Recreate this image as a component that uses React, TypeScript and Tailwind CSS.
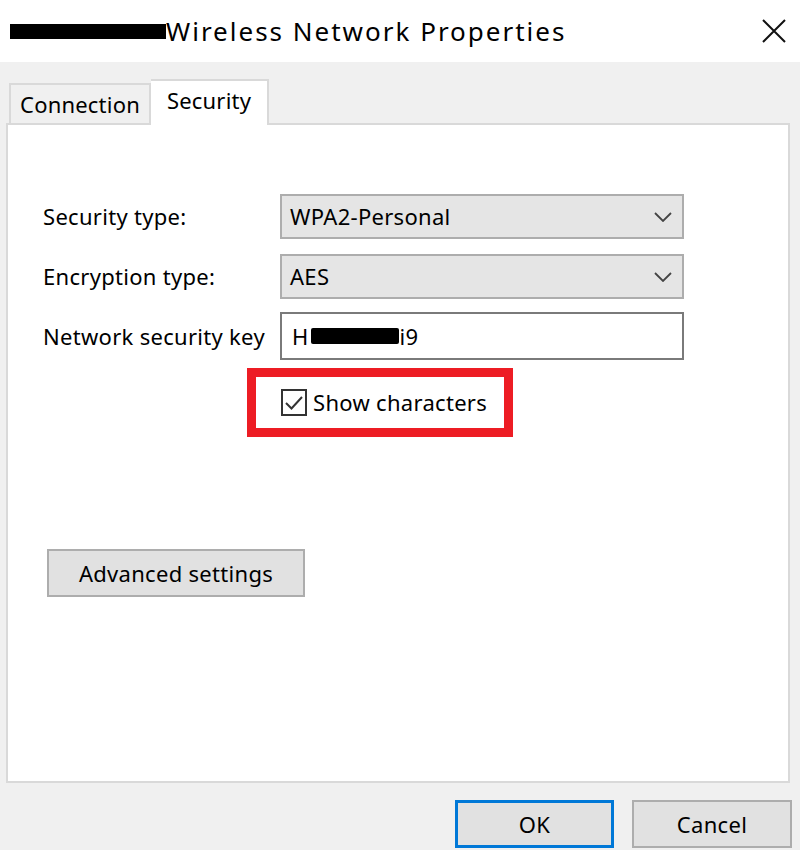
export default function App() {
  const font = { fontFamily: '"Noto Sans", "Open Sans", sans-serif' };
  return (
    <div className="w-[800px] h-[850px] bg-[#f0f0f0] text-[#000] overflow-hidden flex flex-col" style={font}>
      {/* title bar */}
      <div className="h-[62px] bg-white flex items-center pl-[10px] pr-[14px] shrink-0">
        <span className="w-[156px] h-[15px] bg-black mt-[1px]" />
        <span className="text-[26px] leading-none tracking-[2px]">Wireless Network Properties</span>
        <svg className="ml-auto" width="24" height="24" viewBox="0 0 24 24">
          <path d="M1 1 L23 23 M23 1 L1 23" stroke="#111" strokeWidth="2" />
        </svg>
      </div>

      {/* tabs */}
      <div className="flex items-end pl-[9px] h-[61px] shrink-0 text-[22px] tracking-[0.2px]">
        <div className="h-[40px] w-[142px] bg-[#f0f0f0] border-2 border-b-0 border-[#d9d9d9] flex items-center justify-center">
          Connection
        </div>
        <div className="h-[46px] w-[118px] bg-white border-2 border-b-0 border-l-0 border-[#d9d9d9] flex items-start justify-center pt-[3px] -mb-[2px] relative z-10">
          Security
        </div>
      </div>

      {/* panel */}
      <div className="ml-[6px] w-[784px] h-[660px] bg-white border-2 border-[#d9d9d9] shrink-0 pt-[69px] pl-[35px] text-[22px] tracking-[0.3px]">
        <div className="flex flex-col gap-[15px]">
          <div className="flex items-center">
            <span className="w-[237px]">Security type:</span>
            <div className="w-[404px] h-[45px] bg-[#e5e5e5] border-2 border-[#adadad] flex items-center pl-[8px] pr-[10px]">
              <span>WPA2-Personal</span>
              <svg className="ml-auto" width="18" height="10" viewBox="0 0 18 10">
                <path d="M1 1 L9 9 L17 1" fill="none" stroke="#444" strokeWidth="1.8" />
              </svg>
            </div>
          </div>
          <div className="flex items-center">
            <span className="w-[237px]">Encryption type:</span>
            <div className="w-[404px] h-[45px] bg-[#e5e5e5] border-2 border-[#adadad] flex items-center pl-[8px] pr-[10px]">
              <span>AES</span>
              <svg className="ml-auto" width="18" height="10" viewBox="0 0 18 10">
                <path d="M1 1 L9 9 L17 1" fill="none" stroke="#444" strokeWidth="1.8" />
              </svg>
            </div>
          </div>
          <div className="flex items-center -mt-[2px]">
            <span className="w-[237px]">Network security key</span>
            <div className="w-[404px] h-[48px] bg-white border-2 border-[#7a7a7a] flex items-center pl-[10px]">
              <span>H</span>
              <span className="w-[88px] h-[16px] bg-black ml-[2px] mr-[1px] rounded-[2px]" />
              <span>i9</span>
            </div>
          </div>
        </div>

        <div className="ml-[204px] mt-[8px] w-[266px] h-[69px] border-[9px] border-[#ed1c24] flex items-center pl-[25px]">
          <div className="w-[26px] h-[27px] border-2 border-[#333] flex items-center justify-center shrink-0">
            <svg width="20" height="16" viewBox="0 0 20 16">
              <path d="M2 8 L7.5 13.5 L18 2" fill="none" stroke="#333" strokeWidth="2" />
            </svg>
          </div>
          <span className="ml-[6px]">Show characters</span>
        </div>

        <button className="mt-[112px] ml-[4px] w-[258px] h-[48px] bg-[#e1e1e1] border-2 border-[#adadad] flex items-center justify-center">
          Advanced settings
        </button>
      </div>

      {/* footer */}
      <div className="flex justify-end gap-[18px] pr-[8px] pt-[17px] text-[22px] tracking-[0.3px]">
        <button className="w-[159px] h-[48px] bg-[#e1e1e1] border-[3px] border-[#0078d7] flex items-center justify-center">
          OK
        </button>
        <button className="w-[160px] h-[48px] bg-[#e1e1e1] border-2 border-[#adadad] flex items-center justify-center">
          Cancel
        </button>
      </div>
    </div>
  );
}
